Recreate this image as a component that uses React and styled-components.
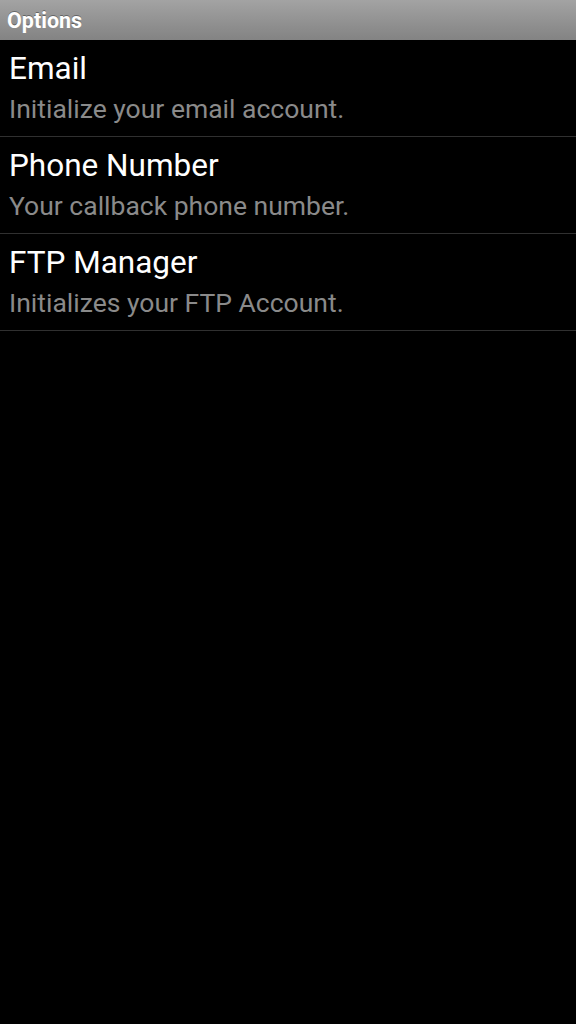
import React from "react";
import styled, { createGlobalStyle } from "styled-components";

const Global = createGlobalStyle`
  html, body { margin: 0; padding: 0; background: #000; }
  body { font-family: Roboto, "Noto Sans", sans-serif; }
`;

const Screen = styled.div`
  width: 576px;
  height: 1024px;
  background: #000;
  display: flex;
  flex-direction: column;
`;

const TitleBar = styled.div`
  height: 40px;
  box-sizing: border-box;
  background: linear-gradient(to bottom, #a3a3a3, #838383);
  display: flex;
  align-items: center;
  padding-left: 7px;
  color: #fff;
  font-weight: 700;
  font-size: 21.5px;
  text-shadow: 0 -1px 0 rgba(0, 0, 0, 0.35);
`;

const List = styled.div`
  display: flex;
  flex-direction: column;
`;

const Row = styled.div`
  height: 97px;
  box-sizing: border-box;
  border-bottom: 1px solid #303030;
  padding: 10px 9px 0;
  display: flex;
  flex-direction: column;
`;

const Title = styled.div`
  color: #fff;
  font-size: 31.5px;
  line-height: 38px;
`;

const Summary = styled.div`
  color: #8a8a8a;
  font-size: 26.5px;
  line-height: 32px;
  margin-top: 5px;
`;

const items = [
  { title: "Email", summary: "Initialize your email account." },
  { title: "Phone Number", summary: "Your callback phone number." },
  { title: "FTP Manager", summary: "Initializes your FTP Account." },
];

export default function App() {
  return (
    <>
      <Global />
      <Screen>
        <TitleBar>Options</TitleBar>
        <List>
          {items.map((it) => (
            <Row key={it.title}>
              <Title>{it.title}</Title>
              <Summary>{it.summary}</Summary>
            </Row>
          ))}
        </List>
      </Screen>
    </>
  );
}
